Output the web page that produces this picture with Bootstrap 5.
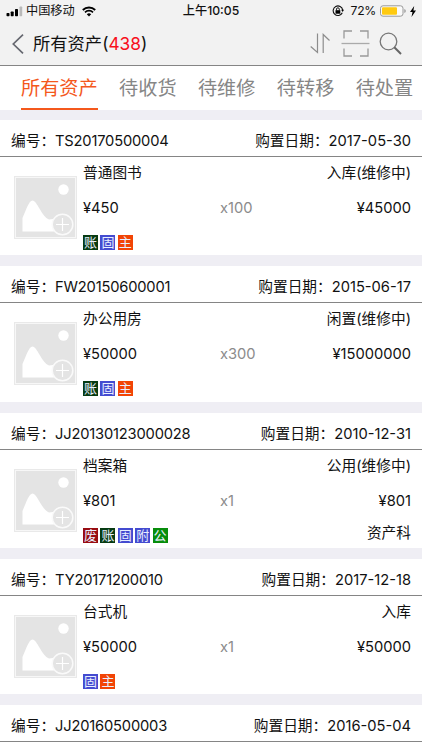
<!DOCTYPE html>
<html lang="zh-CN">
<head>
<meta charset="utf-8">
<meta name="viewport" content="width=device-width, initial-scale=1">
<title>所有资产</title>
<link href="https://cdn.jsdelivr.net/npm/bootstrap@5.3.0/dist/css/bootstrap.min.css" rel="stylesheet">
<style>
body{font-family:Inter,"Noto Sans CJK SC",sans-serif;font-size:14.7px;line-height:20px;color:#111;background:#efeef4;overflow:hidden;height:750px}
svg{display:block;flex:none}
.top-area{background:#f2f2f2;border-bottom:1px solid #858585;height:66px}
.status-bar{height:22px;padding:0 6px 0 6px;font-size:12.2px;color:#111}
.status-bar>div{flex:1 1 0}
.carrier{margin-left:3px}
.wifi{margin-left:7px}
.percent{margin-left:7px;letter-spacing:-.3px}
.title-bar{height:43px;padding:0 20px 0 12px}
.page-title{font-size:17.3px;margin-left:9px}
.total{color:#f8101c}
.scan{margin:0 9px 0 11px}
.tab-strip{height:44px;padding-left:21px;gap:21.3px;background:#fff;font-size:19.2px;line-height:45px;color:#868686}
.tab-strip a{color:inherit;height:44px}
.tab-strip a.current{color:#f4581c;border-bottom:2px solid #f4581c}
.asset-list{padding-top:10px;gap:11px;height:640px}
.asset{height:135.3px;background:#fff;flex:none}
.asset:last-child{height:auto;flex:1 1 0}
.asset-head{height:37px;padding:6px 11px 0;border-bottom:1px solid #858585}
.code{letter-spacing:-.19px}
.asset-body{padding:6px 11px 0 14px}
.thumb{margin:13px 6px 0 0}
.line-a{height:22px}
.line-b{height:25px;margin-top:13px}
.qty{left:137px;color:#8b8b8b}
.tags{gap:2.4px;margin-top:12px}
.dept{margin-top:7px}
.tag{width:15px;height:15px;font-size:13px;line-height:14.5px;color:#e8efff;text-align:center;overflow:hidden}
.t-zhang{background:#073b12}.t-gu{background:#444bd0}.t-zhu{background:#f24405}.t-fei{background:#980c12}.t-gong{background:#078d0b}
</style>
<script src="https://cdn.jsdelivr.net/npm/bootstrap@5.3.0/dist/js/bootstrap.bundle.min.js"></script>
</head>
<body>
<svg width="0" height="0" class="position-absolute">
  <symbol id="placeholder" viewBox="0 0 63 63">
    <rect width="63" height="63" fill="#e9e9e9"/>
    <rect x="1.5" y="1.5" width="60" height="60" fill="#e4e4e4" stroke="#f7f7f7" stroke-width="1"/>
    <circle cx="49.5" cy="13.5" r="5.2" fill="#fff"/>
    <path d="M8.5 55.500V42C12 34 15 24.500 18.5 24.500C23 24.500 28 41 35 43.5L39 43L44 55.500Z" fill="#fff"/>
    <circle cx="48.5" cy="48.5" r="10.3" fill="#e4e4e4" stroke="#fafafa" stroke-width="1.5"/>
    <path d="M42 48.5H55M48.5 42V55" stroke="#fff" stroke-width="1.2"/>
  </symbol>
</svg>
<header class="top-area">
  <div class="status-bar d-flex align-items-center">
    <div class="d-flex align-items-center">
      <svg width="17" height="12" viewBox="0 0 17 12"><rect x=".5" y="8" width="3" height="3.3" rx=".7"/><rect x="4.7" y="6.5" width="3" height="4.8" rx=".7"/><rect x="9" y="4" width="3" height="7.3" rx=".7"/><rect x="13.5" y="1.5" width="2.7" height="9.8" rx=".7" fill="#b9b9b9"/></svg>
      <span class="carrier">中国移动</span>
      <svg class="wifi" width="14" height="11" viewBox="0 0 14 11" fill="none" stroke="#000"><path d="M.8 4A9 9 0 0 1 13.2 4" stroke-width="1.9"/><path d="M3 6.3A5.7 5.7 0 0 1 11 6.3" stroke-width="1.7"/><path d="M7 10.5L4.8 8.3A3.2 3.2 0 0 1 9.2 8.3Z" fill="#000" stroke="none"/></svg>
    </div>
    <span class="clock fw-medium">上午10:05</span>
    <div class="d-flex align-items-center justify-content-end">
      <svg width="12" height="12" viewBox="0 0 12 12"><path d="M10.3 7.8A4.8 4.8 0 1 1 10.7 5" fill="none" stroke="#111" stroke-width="1.1"/><path d="M9.1 4.7H12L10.7 7Z"/><rect x="3.5" y="5.2" width="4.8" height="3.5"/><path d="M4.5 5.5V4.2a1.4 1.4 0 0 1 2.8 0V5.5" fill="none" stroke="#111"/></svg>
      <span class="percent">72%</span>
      <svg class="ms-1" width="26" height="12" viewBox="0 0 26 12"><rect x=".5" y=".8" width="22.5" height="10.4" rx="2.5" fill="#fafafa" stroke="#999"/><rect x="2" y="2.3" width="15" height="7.4" rx="1" fill="#ffca10"/><path d="M24.3 4v4q1.500-.5 1.500-2t-1.500-2" fill="#999"/></svg>
      <svg class="ms-1" width="6" height="11" viewBox="0 0 6 11"><path d="M4.2 0L0 6h2.5L1.5 11L6 4.5H3.4Z"/></svg>
    </div>
  </div>
  <div class="title-bar d-flex align-items-center">
    <svg width="12" height="20" viewBox="0 0 12 20"><path d="M11 .7L1.3 10L11 19.3" fill="none" stroke="#666870" stroke-width="1.7"/></svg>
    <span class="page-title">所有资产(<span class="total">438</span>)</span>
    <div class="d-flex align-items-center ms-auto">
      <svg width="20" height="21" viewBox="0 0 20 21" fill="none" stroke="#8d8d8d" stroke-width="1.2"><path d="M7.5 .5V19.5L.7 13.5M13.2 20V1.5L19.5 7.5"/></svg>
      <svg class="scan" width="29" height="27" viewBox="0 0 29 27" fill="none" stroke="#999" stroke-width="1.3"><path d="M3 8.5V1H11M19 1H27V8.5M3 18.5V26H11M19 26H27V18.5"/><path d="M.5 13.5H28.5" stroke="#aaa"/></svg>
      <svg width="23" height="23" viewBox="0 0 23 23" fill="none" stroke="#777"><circle cx="9.5" cy="9.5" r="8.3" stroke-width="1.3"/><path d="M15.3 15.3L22 22" stroke-width="2" stroke="#666"/></svg>
    </div>
  </div>
</header>
<nav class="tab-strip d-flex text-nowrap overflow-hidden">
  <a class="current text-decoration-none">所有资产</a><a class="text-decoration-none">待收货</a><a class="text-decoration-none">待维修</a><a class="text-decoration-none">待转移</a><a class="text-decoration-none">待处置</a>
</nav>
<main class="asset-list d-flex flex-column">
  <section class="asset">
    <div class="asset-head d-flex align-items-center justify-content-between"><span>编号：<span class="code">TS20170500004</span></span><span>购置日期：2017-05-30</span></div>
    <div class="asset-body d-flex"><svg class="thumb" width="63" height="63"><use href="#placeholder"/></svg>
      <div class="flex-grow-1">
        <div class="line-a d-flex justify-content-between"><span>普通图书</span><span>入库(维修中)</span></div>
        <div class="line-b d-flex justify-content-between position-relative"><span>¥450</span><span class="qty position-absolute">x100</span><span>¥45000</span></div>
        <div class="tags d-flex"><span class="tag t-zhang">账</span><span class="tag t-gu">固</span><span class="tag t-zhu">主</span></div>
      </div>
    </div>
  </section>
  <section class="asset">
    <div class="asset-head d-flex align-items-center justify-content-between"><span>编号：<span class="code">FW20150600001</span></span><span>购置日期：2015-06-17</span></div>
    <div class="asset-body d-flex"><svg class="thumb" width="63" height="63"><use href="#placeholder"/></svg>
      <div class="flex-grow-1">
        <div class="line-a d-flex justify-content-between"><span>办公用房</span><span>闲置(维修中)</span></div>
        <div class="line-b d-flex justify-content-between position-relative"><span>¥50000</span><span class="qty position-absolute">x300</span><span>¥15000000</span></div>
        <div class="tags d-flex"><span class="tag t-zhang">账</span><span class="tag t-gu">固</span><span class="tag t-zhu">主</span></div>
      </div>
    </div>
  </section>
  <section class="asset">
    <div class="asset-head d-flex align-items-center justify-content-between"><span>编号：<span class="code">JJ20130123000028</span></span><span>购置日期：2010-12-31</span></div>
    <div class="asset-body d-flex"><svg class="thumb" width="63" height="63"><use href="#placeholder"/></svg>
      <div class="flex-grow-1">
        <div class="line-a d-flex justify-content-between"><span>档案箱</span><span>公用(维修中)</span></div>
        <div class="line-b d-flex justify-content-between position-relative"><span>¥801</span><span class="qty position-absolute">x1</span><span>¥801</span></div>
        <div class="d-flex justify-content-between"><div class="tags d-flex"><span class="tag t-fei">废</span><span class="tag t-zhang">账</span><span class="tag t-gu">固</span><span class="tag t-gu">附</span><span class="tag t-gong">公</span></div><span class="dept">资产科</span></div>
      </div>
    </div>
  </section>
  <section class="asset">
    <div class="asset-head d-flex align-items-center justify-content-between"><span>编号：<span class="code">TY20171200010</span></span><span>购置日期：2017-12-18</span></div>
    <div class="asset-body d-flex"><svg class="thumb" width="63" height="63"><use href="#placeholder"/></svg>
      <div class="flex-grow-1">
        <div class="line-a d-flex justify-content-between"><span>台式机</span><span>入库</span></div>
        <div class="line-b d-flex justify-content-between position-relative"><span>¥50000</span><span class="qty position-absolute">x1</span><span>¥50000</span></div>
        <div class="tags d-flex"><span class="tag t-gu">固</span><span class="tag t-zhu">主</span></div>
      </div>
    </div>
  </section>
  <section class="asset">
    <div class="asset-head d-flex align-items-center justify-content-between"><span>编号：<span class="code">JJ20160500003</span></span><span>购置日期：2016-05-04</span></div>
  </section>
</main>
</body>
</html>
